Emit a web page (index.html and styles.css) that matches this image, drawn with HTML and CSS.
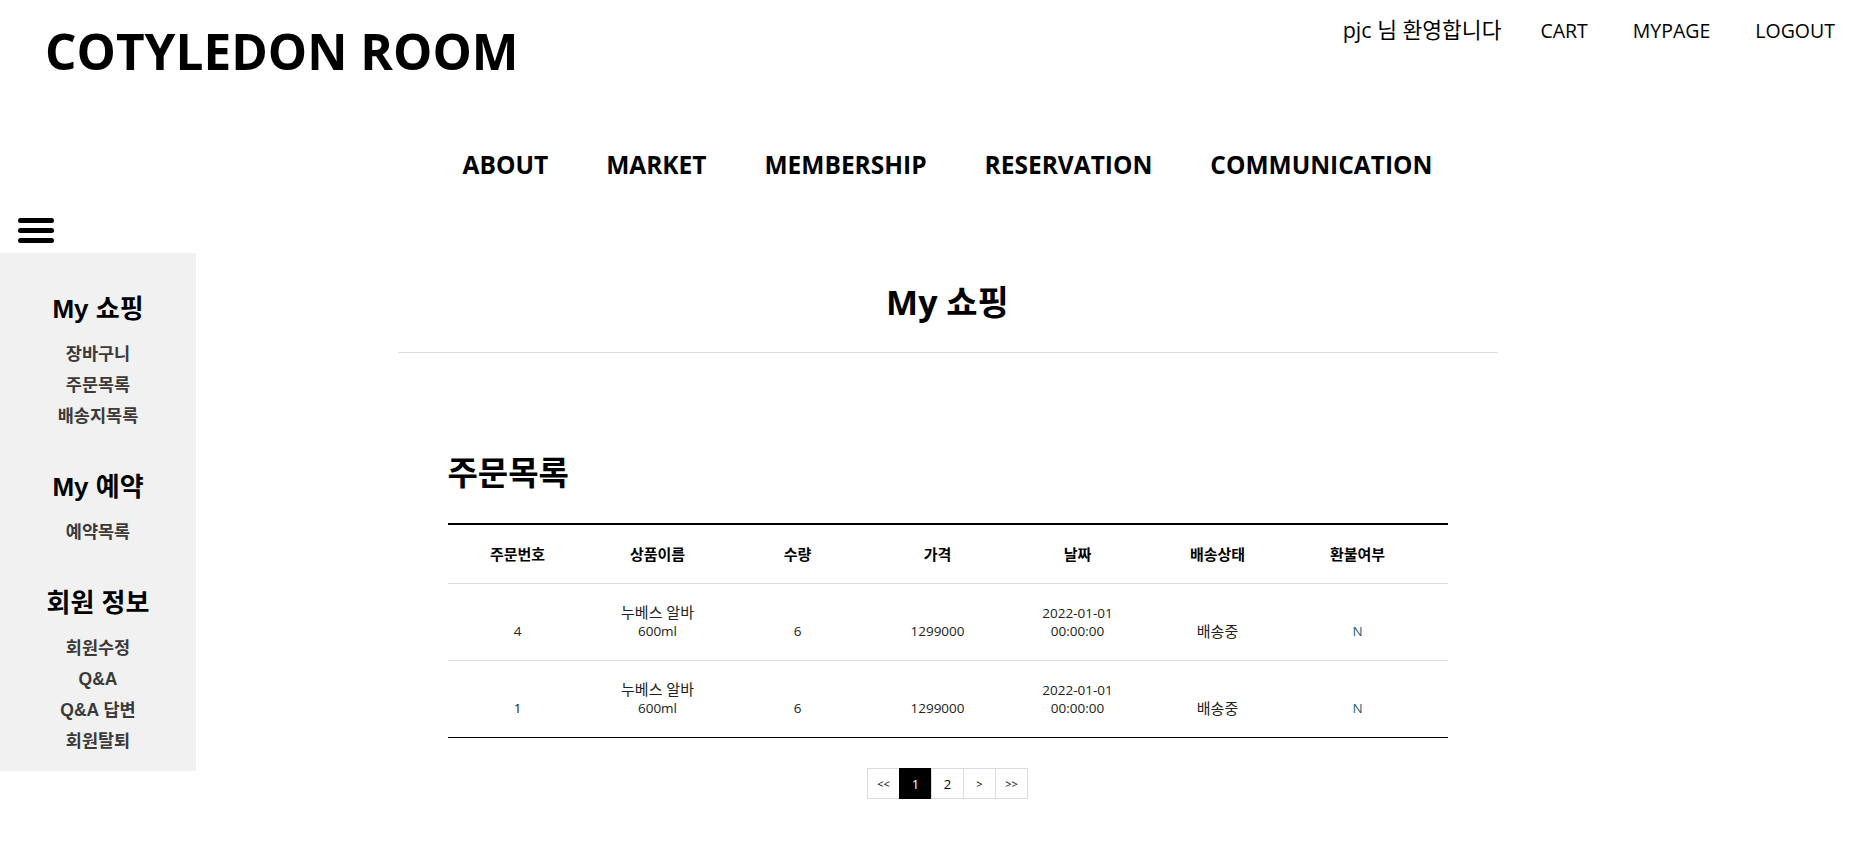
FILE: index.html
```html
<!DOCTYPE html>
<html lang="ko">
<head>
<meta charset="utf-8">
<title>COTYLEDON ROOM - My 쇼핑</title>
<link rel="stylesheet" href="styles.css">
</head>
<body>
<header class="site-header">
  <h1 class="logo">COTYLEDON ROOM</h1>
  <div class="user-menu">
    <span class="welcome">pjc 님 환영합니다</span>
    <a href="#">CART</a>
    <a href="#">MYPAGE</a>
    <a href="#">LOGOUT</a>
  </div>
</header>

<nav class="gnb">
  <a href="#">ABOUT</a>
  <a href="#">MARKET</a>
  <a href="#">MEMBERSHIP</a>
  <a href="#">RESERVATION</a>
  <a href="#">COMMUNICATION</a>
</nav>

<button class="menu-toggle" type="button" aria-label="menu">
  <svg width="36" height="25" viewBox="0 0 36 25">
    <g stroke="#000" stroke-width="5" stroke-linecap="round">
      <line x1="2.5" y1="2.5" x2="33.5" y2="2.5"/>
      <line x1="2.5" y1="12.5" x2="33.5" y2="12.5"/>
      <line x1="2.5" y1="22.5" x2="33.5" y2="22.5"/>
    </g>
  </svg>
</button>

<div class="body-area">
  <aside class="sidebar">
    <div class="side-group">
      <h4>My 쇼핑</h4>
      <ul>
        <li><a href="#">장바구니</a></li>
        <li><a href="#">주문목록</a></li>
        <li><a href="#">배송지목록</a></li>
      </ul>
    </div>
    <div class="side-group">
      <h4>My 예약</h4>
      <ul>
        <li><a href="#">예약목록</a></li>
      </ul>
    </div>
    <div class="side-group">
      <h4>회원 정보</h4>
      <ul>
        <li><a href="#">회원수정</a></li>
        <li><a href="#">Q&amp;A</a></li>
        <li><a href="#">Q&amp;A 답변</a></li>
        <li><a href="#">회원탈퇴</a></li>
      </ul>
    </div>
  </aside>

  <main class="content">
    <div class="inner">
      <h2 class="page-title">My 쇼핑</h2>
      <section class="orders-section">
        <h3 class="section-title">주문목록</h3>
        <div class="orders">
          <div class="orders-row orders-head">
            <div>주문번호</div><div>상품이름</div><div>수량</div><div>가격</div><div>날짜</div><div>배송상태</div><div>환불여부</div>
          </div>
          <div class="orders-row">
            <div>4</div><div><span class="ko-line">누베스 알바</span><br>600ml</div><div>6</div><div>1299000</div><div>2022-01-01<br>00:00:00</div><div class="ko">배송중</div><div class="refund">N</div>
          </div>
          <div class="orders-row">
            <div>1</div><div><span class="ko-line">누베스 알바</span><br>600ml</div><div>6</div><div>1299000</div><div>2022-01-01<br>00:00:00</div><div class="ko">배송중</div><div class="refund">N</div>
          </div>
        </div>
        <div class="pager">
          <a href="#" class="arrow">&lt;&lt;</a>
          <a href="#" class="current">1</a>
          <a href="#">2</a>
          <a href="#" class="arrow">&gt;</a>
          <a href="#" class="arrow">&gt;&gt;</a>
        </div>
      </section>
    </div>
  </main>
</div>
</body>
</html>
```
FILE: styles.css
```css
body {
  margin: 0;
  font-family: "Open Sans", "Noto Sans CJK KR", sans-serif;
  color: #000;
  background: #fff;
}

a {
  color: inherit;
  text-decoration: none;
}

/* header */
.site-header {
  display: flex;
  justify-content: space-between;
  align-items: flex-start;
}

.logo {
  margin: 0;
  padding: 18px 0 0 45px;
  font-size: 49.5px;
  font-weight: 700;
  line-height: 67px;
}

.user-menu {
  display: flex;
  align-items: baseline;
  gap: 45px;
  padding: 17px 30px 0 0;
  font-size: 19.5px;
  line-height: 26px;
}

.welcome {
  font-size: 21.5px;
  margin-right: -6px;
}

/* main nav */
.gnb {
  display: flex;
  justify-content: center;
  gap: 58px;
  margin-top: 63px;
  padding-left: 30px;
  font-size: 24.5px;
  font-weight: 700;
  line-height: 34px;
}

.menu-toggle {
  display: block;
  margin: 36px 0 0 18px;
  padding: 0;
  border: 0;
  background: none;
  width: 36px;
  height: 25px;
  cursor: pointer;
}

.menu-toggle svg {
  display: block;
}

.body-area {
  display: flow-root;
  margin-top: 10px;
}

/* sidebar */
.sidebar {
  float: left;
  width: 196px;
  background: #f1f1f1;
  padding: 41px 0 14px;
  text-align: center;
}

.side-group + .side-group {
  margin-top: 40px;
}

.side-group h4 {
  margin: 0 0 15px;
  font-family: "Liberation Sans", "Noto Sans CJK KR", sans-serif;
  font-size: 26px;
  font-weight: 700;
  line-height: 30px;
}

.side-group ul {
  list-style: none;
  margin: 0;
  padding: 0;
  font-family: "Liberation Sans", "Noto Sans CJK KR", sans-serif;
  font-size: 17.5px;
  font-weight: 700;
  line-height: 31px;
}

.side-group a {
  color: #3a3a3a;
}

/* content */
.content {
  padding: 0 0 40px 30px;
}

.inner {
  width: 1100px;
  margin: 0 auto;
}

.page-title {
  margin: 0;
  padding: 27px 0 28px;
  border-bottom: 1px solid #dcdcdc;
  text-align: center;
  font-size: 34px;
  font-weight: 700;
  line-height: 44px;
}

.orders-section {
  width: 1000px;
  margin: 0 auto;
}

.section-title {
  margin: 100px 0 30px;
  font-size: 33px;
  font-weight: 700;
  line-height: 40px;
}

.orders {
  border-top: 2px solid #000;
  border-bottom: 1px solid #000;
  font-size: 13.5px;
  line-height: 18px;
  color: #222;
}

.orders-row {
  display: grid;
  grid-template-columns: repeat(7, 140px);
  align-items: end;
  padding: 20px 0;
  text-align: center;
}

.orders-row + .orders-row {
  border-top: 1px solid #dcdcdc;
}

.orders-head {
  font-size: 15px;
  font-weight: 700;
  color: #000;
}

.ko {
  font-size: 15px;
}

.ko-line {
  font-size: 15px;
  line-height: 14px;
}

.refund {
  color: #1a6478;
}

/* pagination */
.pager {
  display: flex;
  justify-content: center;
  margin-top: 30px;
}

.pager a {
  box-sizing: border-box;
  width: 33px;
  height: 31px;
  display: flex;
  align-items: center;
  justify-content: center;
  border: 1px solid #dcdcdc;
  font-size: 13px;
  color: #000;
}

.pager a + a {
  margin-left: -1px;
}

.pager .arrow {
  font-size: 11px;
}

.pager .current {
  background: #000;
  border-color: #000;
  color: #fff;
}
```
